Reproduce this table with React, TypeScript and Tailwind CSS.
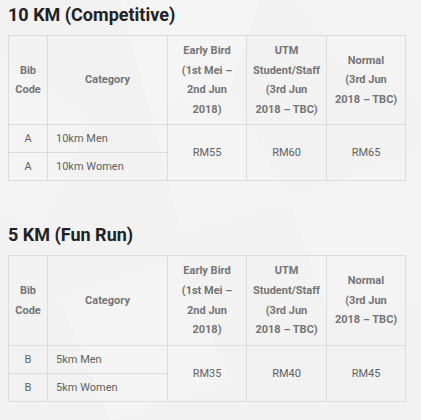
import React from "react";

type Race = {
  title: string;
  code: string;
  rows: string[];
  prices: string[];
};

const races: Race[] = [
  { title: "10 KM (Competitive)", code: "A", rows: ["10km Men", "10km Women"], prices: ["RM55", "RM60", "RM65"] },
  { title: "5 KM (Fun Run)", code: "B", rows: ["5km Men", "5km Women"], prices: ["RM35", "RM40", "RM45"] },
];

const th = "border border-[#dcdcdc] px-1 py-[5px] text-center align-middle font-bold leading-[19.6px] text-[#747474]";
const td = "border border-[#dcdcdc] px-2 py-1 align-middle leading-[19px] text-[#626262]";

function Backdrop() {
  return (
    <svg className="pointer-events-none absolute inset-0 h-full w-full" viewBox="0 0 421 420" preserveAspectRatio="none" aria-hidden>
      <polygon points="120,0 260,0 230,90 150,110" fill="#ffffff" opacity="0.25" />
      <polygon points="150,110 230,90 290,200 180,230" fill="#ffffff" opacity="0.2" />
      <polygon points="0,60 90,120 40,230 0,210" fill="#ffffff" opacity="0.2" />
      <polygon points="290,200 421,150 421,300 330,320" fill="#ffffff" opacity="0.2" />
      <polygon points="60,300 180,260 230,380 110,420" fill="#ffffff" opacity="0.2" />
      <polygon points="300,0 421,0 421,100 340,60" fill="#ffffff" opacity="0.2" />
    </svg>
  );
}

function PriceTable({ race }: { race: Race }) {
  return (
    <section>
      <h2 className="text-[18px] font-bold leading-[22px] text-[#222]">{race.title}</h2>
      <table className="mt-[9px] w-[397px] table-fixed border-collapse text-[11px]">
        <colgroup>
          <col className="w-[39px]" />
          <col className="w-[120px]" />
          <col className="w-[79px]" />
          <col className="w-[80px]" />
          <col className="w-[79px]" />
        </colgroup>
        <thead>
          <tr>
            <th className={th}>Bib<br />Code</th>
            <th className={th}>Category</th>
            <th className={th}>Early Bird<br />(1st Mei –<br />2nd Jun<br />2018)</th>
            <th className={th}>UTM<br />Student/Staff<br />(3rd Jun<br />2018 – TBC)</th>
            <th className={th}>Normal<br />(3rd Jun<br />2018 – TBC)</th>
          </tr>
        </thead>
        <tbody>
          {race.rows.map((name, i) => (
            <tr key={name}>
              <td className={`${td} text-center`}>{race.code}</td>
              <td className={td}>{name}</td>
              {i === 0 &&
                race.prices.map((p) => (
                  <td key={p} rowSpan={2} className={`${td} text-center`}>
                    {p}
                  </td>
                ))}
            </tr>
          ))}
        </tbody>
      </table>
    </section>
  );
}

export default function App() {
  return (
    <div className="relative h-[420px] w-[421px] overflow-hidden bg-[#f2f2f2] font-['Roboto',sans-serif]">
      <Backdrop />
      <div className="relative flex flex-col gap-[43px] px-2 pt-[4px]">
        {races.map((r) => (
          <PriceTable key={r.title} race={r} />
        ))}
      </div>
    </div>
  );
}
